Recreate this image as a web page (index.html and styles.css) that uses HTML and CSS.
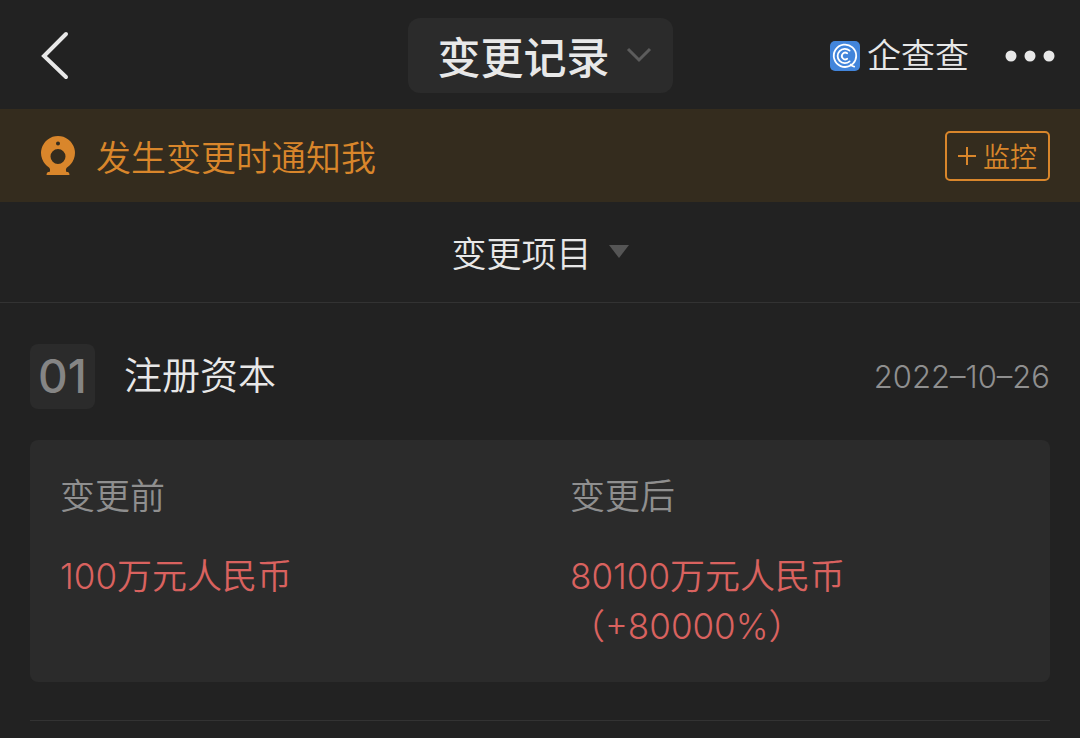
FILE: index.html
```html
<!DOCTYPE html>
<html lang="zh-CN">
<head>
<meta charset="UTF-8" />
<meta name="viewport" content="width=device-width, initial-scale=1" />
<title>变更记录</title>
<link rel="stylesheet" href="styles.css">
</head>
<body>

<header class="topbar">
  <button class="back" type="button" aria-label="返回">
    <svg width="30" height="50" viewBox="0 0 30 50" fill="none" stroke="currentColor" stroke-width="4" stroke-linecap="round">
      <path d="M26 3 4 25l22 21" />
    </svg>
  </button>

  <h1 class="title">
    <button class="title-btn" type="button">
      变更记录
      <svg width="26" height="16" viewBox="0 0 26 16" fill="none" stroke="#5c5c5c" stroke-width="3">
        <path d="M2 2l11 11L24 2" />
      </svg>
    </button>
  </h1>

  <div class="actions">
    <a class="brand" href="#">
      <svg width="30" height="30" viewBox="0 0 30 30" fill="none" stroke="#fff" stroke-width="1.8" stroke-linecap="round">
        <rect width="30" height="30" rx="5" fill="#4285db" stroke="none" />
        <path d="M20 24.800A11.200 11.200 0 1 1 26.200 15c0 3-1 5.400-3.200 7.600-.9.900-2 1.300-3.200 1.100 1.400.3 2.600 1.800 4.400 2" />
        <path d="M19.600 9.600a7.200 7.200 0 1 0 0 10.800" />
        <path d="M17.200 12.200a3.400 3.400 0 1 0 0 5.600" />
      </svg>
      企查查
    </a>
    <button class="more" type="button" aria-label="更多">
      <svg width="50" height="12" viewBox="0 0 50 12" fill="currentColor">
        <circle cx="6" cy="6" r="5.500" />
        <circle cx="25" cy="6" r="5.500" />
        <circle cx="44" cy="6" r="5.500" />
      </svg>
    </button>
  </div>
</header>

<div class="notice">
  <svg width="36" height="42" viewBox="0 0 36 42" fill="#d9862b">
    <path fill-rule="evenodd" d="M18 1a17 17 0 0 1 9 31.400c-1.300 1-1.400 3.600-.4 4.600h1.400q1.500.5 1.500 3h-23q0-2.500 1.500-3h1.400c1-1 .9-3.600-.4-4.600A17 17 0 0 1 18 1zM18 14a7.500 7.500 0 1 0 0 15 7.500 7.500 0 0 0 0-15zM18 6.500a2 2 0 1 0 0 4 2 2 0 0 0 0-4z" />
  </svg>
  <span class="notice-text">发生变更时通知我</span>
  <button class="monitor" type="button">
    <svg width="18" height="18" viewBox="0 0 18 18" stroke="currentColor" stroke-width="2">
      <path d="M9 0v18M0 9h18" />
    </svg>
    监控
  </button>
</div>

<button class="filter" type="button">
  变更项目
  <svg width="20" height="14" viewBox="0 0 20 14" fill="#555">
    <path d="M0 1h20L10 14z" />
  </svg>
</button>

<main class="records">
  <article class="record">
    <div class="record-head">
      <span class="index">01</span>
      <h2 class="name">注册资本</h2>
      <time class="date" datetime="2022-10-26">2022–10–26</time>
    </div>
    <dl class="card">
      <div class="col">
        <dt>变更前</dt>
        <dd>100万元人民币</dd>
      </div>
      <div class="col">
        <dt>变更后</dt>
        <dd>80100万元人民币<br>（+80000%）</dd>
      </div>
    </dl>
  </article>
</main>

</body>
</html>
```
FILE: styles.css
```css
:root {
  --bg: #222222;
  --panel: #2b2b2b;
  --text: #e8e8e8;
  --muted: #8f8f8f;
  --orange: #d9862b;
  --red: #d9625f;
}

* {
  box-sizing: border-box;
}

body {
  margin: 0;
  background: var(--bg);
  color: var(--text);
  font-family: Inter, "Noto Sans CJK SC", sans-serif;
  font-size: 35px;
  font-weight: 350;
}

button {
  border: 0;
  padding: 0;
  background: none;
  color: inherit;
  font: inherit;
  cursor: pointer;
}

svg {
  display: block;
  flex-shrink: 0;
}

h1, h2, dl, dd {
  margin: 0;
  font-weight: inherit;
}

.topbar {
  display: grid;
  grid-template-columns: 1fr auto 1fr;
  align-items: center;
  padding: 18px 25px 16px 40px;
}

.back {
  justify-self: start;
}

.title {
  font-size: 43px;
  font-weight: 500;
  margin-left: -15px;
}

.title-btn {
  display: flex;
  align-items: center;
  gap: 16px;
  height: 75px;
  padding: 0 21px 2px 30px;
  border-radius: 12px;
  background: var(--panel);
}

.actions {
  display: flex;
  align-items: center;
  justify-self: end;
  gap: 36px;
}

.brand {
  display: flex;
  align-items: center;
  gap: 7px;
  color: inherit;
  font-size: 34px;
  line-height: 40px;
  text-decoration: none;
}

.notice {
  display: flex;
  align-items: center;
  gap: 20px;
  height: 93px;
  padding: 0 30px 0 40px;
  background: #342c1e;
  color: var(--orange);
}

.monitor {
  display: flex;
  align-items: center;
  gap: 7px;
  height: 50px;
  margin-left: auto;
  padding: 0 11px;
  border: 2px solid var(--orange);
  border-radius: 5px;
  font-size: 27px;
}

.filter {
  display: flex;
  align-items: center;
  justify-content: center;
  gap: 17px;
  width: 100%;
  height: 101px;
  padding-bottom: 2px;
  border-bottom: 1px solid #333;
}

.records {
  padding: 0 30px;
}

.record {
  padding: 41px 0 38px;
  border-bottom: 1px solid #333;
}

.record-head {
  display: flex;
  align-items: center;
  margin-bottom: 31px;
}

.index {
  width: 65px;
  border-radius: 8px;
  background: var(--panel);
  color: #858585;
  font-size: 46px;
  font-weight: 500;
  line-height: 65px;
  text-align: center;
}

.name {
  margin-left: 29px;
  padding-bottom: 4px;
  font-size: 38px;
  line-height: 50px;
}

.date {
  margin-left: auto;
  color: var(--muted);
  font-size: 31px;
}

.card {
  display: grid;
  grid-template-columns: 1fr 1fr;
  border-radius: 8px;
  background: var(--panel);
}

.col {
  padding: 31px 30px;
  line-height: 50px;
}

.col dt {
  margin-bottom: 30px;
  color: var(--muted);
}

.col dd {
  color: var(--red);
}
```
